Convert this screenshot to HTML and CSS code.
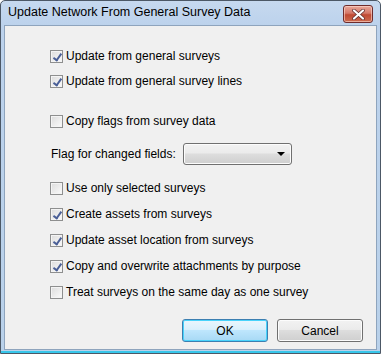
FILE: index.html
```html
<!DOCTYPE html>
<html lang="en">
<head>
  <meta charset="UTF-8" />
  <title>Update Network From General Survey Data</title>
  <link rel="stylesheet" href="styles.css">
</head>
<body>
  <div class="window">
    <div class="titlebar">
      <span class="title">Update Network From General Survey Data</span>
      <button class="close" aria-label="Close">
        <svg width="13" height="11" viewBox="0 0 13 11">
          <path d="M2 1.5 L11 9.5 M11 1.5 L2 9.5" stroke="#5a2a2a" stroke-width="3.6" stroke-linecap="round"/>
          <path d="M2 1.5 L11 9.5 M11 1.5 L2 9.5" stroke="#fff" stroke-width="2.2" stroke-linecap="round"/>
        </svg>
      </button>
    </div>
    <div class="client">
      <label class="row"><span class="box checked"></span>Update from general surveys</label>
      <label class="row r2"><span class="box checked"></span>Update from general survey lines</label>
      <label class="row r3"><span class="box"></span>Copy flags from survey data</label>
      <div class="field">
        <span class="field-label">Flag for changed fields:</span>
        <div class="combo"><span class="arrow"></span></div>
      </div>
      <label class="row r5"><span class="box"></span>Use only selected surveys</label>
      <label class="row r6"><span class="box checked"></span>Create assets from surveys</label>
      <label class="row r6"><span class="box checked"></span>Update asset location from surveys</label>
      <label class="row r6"><span class="box checked"></span>Copy and overwrite attachments by purpose</label>
      <label class="row r6"><span class="box"></span>Treat surveys on the same day as one survey</label>
      <div class="buttons">
        <button class="btn default">OK</button>
        <button class="btn">Cancel</button>
      </div>
    </div>
  </div>
</body>
</html>
```

FILE: styles.css
```css
* {
  box-sizing: border-box;
}
body {
  margin: 0;
  font-family: "Liberation Sans", Arial, sans-serif;
  font-size: 12px;
  color: #000;
  background: #fff;
}
.window {
  width: 381px;
  height: 354px;
  border: 1px solid #4c5866;
  border-radius: 5px 5px 0 0;
  background: linear-gradient(#c6d9ef, #bcd2ec 25px, #b9d1ea);
  display: flex;
  flex-direction: column;
  padding: 0 3px 3px 3px;
  box-shadow: inset 0 -2px 0 #37c6ea;
}
.titlebar {
  height: 24px;
  display: flex;
  align-items: center;
  padding-left: 4px;
  position: relative;
}
.title {
  margin-top: -3px;
  font-size: 12.5px;
}
.close {
  position: absolute;
  right: 4px;
  top: 4px;
  width: 30px;
  height: 18px;
  border: 1px solid #6e2c2c;
  border-radius: 3px;
  background: linear-gradient(#e9a99b, #d47768 45%, #c04a33 55%, #cc6b4f);
  box-shadow: inset 0 0 0 1px rgba(255, 220, 210, 0.6);
  display: flex;
  align-items: center;
  justify-content: center;
  padding: 0;
}
.client {
  flex: 1;
  background: #f0f0f0;
  border: 1px solid #8ea4bd;
  padding: 22px 0 0 45px;
  display: flex;
  flex-direction: column;
}
.row {
  display: flex;
  align-items: center;
  height: 16px;
  gap: 3px;
}
.r2 {
  margin-top: 9px;
}
.r3 {
  margin-top: 24px;
}
.r5 {
  margin-top: 15px;
}
.r6 {
  margin-top: 10px;
}
.box {
  width: 13px;
  height: 13px;
  border: 1px solid #8e8f8f;
  background: linear-gradient(135deg, #dcdcdc, #fbfbfb);
  box-shadow: inset 0 0 0 1px #f4f4f4;
  position: relative;
  flex: none;
}
.box.checked::after {
  content: "";
  position: absolute;
  left: 4px;
  top: 1px;
  width: 3px;
  height: 7px;
  border: solid #4a5f97;
  border-width: 0 2px 2px 0;
  transform: rotate(35deg);
}
.field {
  display: flex;
  align-items: center;
  margin-top: 14px;
  height: 22px;
  padding-left: 1px;
}
.field-label {
  width: 132px;
}
.combo {
  width: 109px;
  height: 22px;
  border: 1px solid #707070;
  border-radius: 3px;
  background: linear-gradient(#f2f2f2, #ebebeb 45%, #dddddd 50%, #cfcfcf);
  box-shadow: inset 0 0 0 1px #fcfcfc;
  position: relative;
}
.arrow {
  position: absolute;
  right: 6px;
  top: 8px;
  border: 4px solid transparent;
  border-top: 4px solid #000;
  border-bottom: 0;
}
.buttons {
  display: flex;
  justify-content: flex-end;
  gap: 9px;
  margin-top: 19px;
  padding-right: 13px;
}
.btn {
  width: 86px;
  height: 23px;
  font: inherit;
  border: 1px solid #707070;
  border-radius: 3px;
  background: linear-gradient(#f2f2f2, #ebebeb 45%, #dddddd 50%, #cfcfcf);
  box-shadow: inset 0 0 0 1px #fcfcfc;
  padding: 0;
}
.btn.default {
  border-color: #3c7fb1;
  background: linear-gradient(#eaf6fd, #d9f0fc 45%, #bee6fd 50%, #a7d9f5);
  box-shadow: inset 0 0 0 1px #48d3fb;
}
```
